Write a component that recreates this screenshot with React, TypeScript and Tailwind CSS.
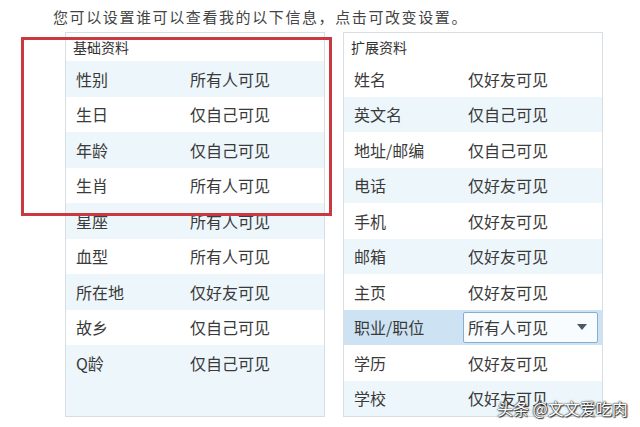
import React from "react";

type Row = { name: string; value: string };

const basicRows: Row[] = [
  { name: "性别", value: "所有人可见" },
  { name: "生日", value: "仅自己可见" },
  { name: "年龄", value: "仅自己可见" },
  { name: "生肖", value: "所有人可见" },
  { name: "星座", value: "所有人可见" },
  { name: "血型", value: "所有人可见" },
  { name: "所在地", value: "仅好友可见" },
  { name: "故乡", value: "仅自己可见" },
  { name: "Q龄", value: "仅自己可见" },
];

const extraRows: Row[] = [
  { name: "姓名", value: "仅好友可见" },
  { name: "英文名", value: "仅自己可见" },
  { name: "地址/邮编", value: "仅自己可见" },
  { name: "电话", value: "仅好友可见" },
  { name: "手机", value: "仅好友可见" },
  { name: "邮箱", value: "仅好友可见" },
  { name: "主页", value: "仅好友可见" },
  { name: "职业/职位", value: "所有人可见" },
  { name: "学历", value: "仅好友可见" },
  { name: "学校", value: "仅好友可见" },
];

function Select({ value }: { value: string }) {
  return (
    <div className="-ml-[5px] flex h-[31px] w-[135px] items-center justify-between rounded-[2px] border border-[#86aed3] bg-[#f9fcfe] pl-[4px] pr-[10px]">
      <span>{value}</span>
      <svg width="10" height="6" viewBox="0 0 10 6">
        <path d="M0 0h10L5 6z" fill="#4a5866" />
      </svg>
    </div>
  );
}

function Panel({
  title,
  rows,
  stripeOdd,
  selected,
}: {
  title: string;
  rows: Row[];
  stripeOdd: boolean;
  selected?: number;
}) {
  return (
    <div className="flex h-[385px] w-[260px] flex-col border border-[#d6dde3] bg-white">
      <div className="flex h-[28px] items-center pl-[7px] text-[14px] text-[#333]">{title}</div>
      {rows.map((r, i) => {
        const striped = stripeOdd ? i % 2 === 0 : i % 2 === 1;
        const bg = i === selected ? "bg-[#cde3f4]" : striped ? "bg-[#edf6fb]" : "bg-white";
        return (
          <div key={r.name} className={`flex h-[35.5px] shrink-0 items-center ${bg}`}>
            <span className="w-[124px] pl-[10px]">{r.name}</span>
            {i === selected ? <Select value={r.value} /> : <span>{r.value}</span>}
          </div>
        );
      })}
      {/* empty space below the last row keeps the stripe colour */}
      <div className="flex-1 bg-[#edf6fb]" />
    </div>
  );
}

export default function App() {
  return (
    <div className="relative h-[427px] w-[640px] overflow-hidden bg-white font-['Noto_Sans_CJK_SC',sans-serif] text-[16px] leading-[20px] text-[#3a3a3a]">
      <div className="pl-[53px] pt-[7px] text-[15px] tracking-[1.6px] text-[#444]">
        您可以设置谁可以查看我的以下信息，点击可改变设置。
      </div>

      <div className="mt-[5px] flex gap-[18px] pl-[65px]">
        <Panel title="基础资料" rows={basicRows} stripeOdd />
        <Panel title="扩展资料" rows={extraRows} stripeOdd={false} selected={7} />
      </div>

      {/* red highlight frame */}
      <div className="pointer-events-none absolute left-[21px] top-[37px] h-[179px] w-[311px] border-[3px] border-[#c9393f]" />

      <div className="absolute left-[497px] top-[398px] text-[16px] text-white [text-shadow:0_0_2px_#222,0_0_1px_#222,1px_1px_1px_#333]">
        头条 @文文爱吃肉
      </div>
    </div>
  );
}
